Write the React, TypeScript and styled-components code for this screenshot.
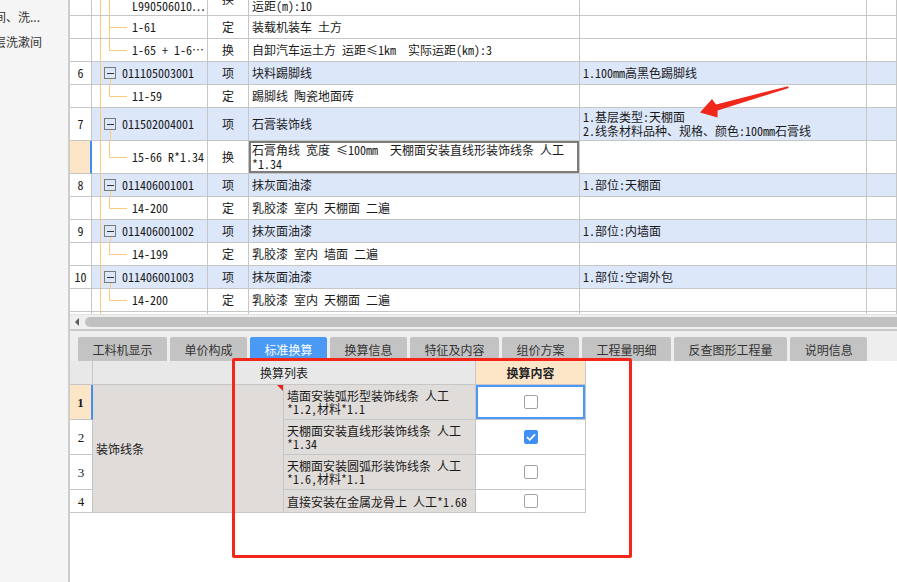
import React from 'react';
import styled, { createGlobalStyle } from 'styled-components';

const GRID_FONT = `"Noto Sans Mono CJK SC", "Noto Sans CJK SC", "Liberation Mono", monospace`;
const UI_FONT = `"Noto Sans CJK SC", "Noto Sans", sans-serif`;
const LINE = '#c6c6c6';
const TREE = '#ffca7a';

const GlobalStyle = createGlobalStyle`
  html, body { margin: 0; padding: 0; background: #fff; }
  body { font-family: ${UI_FONT}; font-size: 12px; color: #1e1e1e; }
  * { box-sizing: border-box; }
`;

const Page = styled.div`
  position: relative;
  display: flex;
  width: 897px;
  height: 582px;
  overflow: hidden;
  background: #fff;
`;

const Sidebar = styled.div`
  width: 70px;
  flex-shrink: 0;
  background: #f5f5f5;
  border-right: 2px solid #cdcdcd;
  padding-top: 10px;
  display: flex;
  flex-direction: column;
  overflow: hidden;
`;

const SideItem = styled.div`
  height: 25px;
  line-height: 14px;
  margin-left: -6px;
  white-space: nowrap;
  color: #333;
  font-family: ${UI_FONT};
  font-size: 12px;
`;

const Main = styled.div`
  flex: 1;
  min-width: 0;
  display: flex;
  flex-direction: column;
`;

const TopGrid = styled.div`
  height: 314px;
  flex-shrink: 0;
  overflow: hidden;
  font-family: ${GRID_FONT};
  font-size: 12px;
  line-height: 14px;
  color: #1a1a1a;
`;

const GridRow = styled.div<{ $h: number; $first?: boolean; $parent?: boolean }>`
  display: grid;
  grid-template-columns: 22px 116px 41px 331px 287px 1fr;
  height: ${(p) => p.$h}px;
  margin-top: ${(p) => (p.$first ? -17 : 0)}px;
  background: ${(p) => (p.$parent ? '#dce7fa' : '#fff')};
`;

const Cell = styled.div<{ $center?: boolean; $pad?: number }>`
  border-right: 1px solid ${LINE};
  border-bottom: 1px solid ${LINE};
  display: flex;
  flex-direction: column;
  justify-content: center;
  align-items: ${(p) => (p.$center ? 'center' : 'flex-start')};
  padding-left: ${(p) => p.$pad ?? 0}px;
  overflow: hidden;
  white-space: pre;
`;

const NumCell = styled(Cell)<{ $sel?: boolean }>`
  background: ${(p) => (p.$sel ? '#fde6c8' : '#fff')};
  border-right: ${(p) => (p.$sel ? '2px solid #3f8ef0' : `1px solid ${LINE}`)};
`;

const CodeCell = styled.div<{ $sel?: boolean }>`
  border-right: 1px solid ${LINE};
  border-bottom: 1px solid ${LINE};
  display: flex;
  align-items: stretch;
  overflow: hidden;
  white-space: pre;
  background: ${(p) => (p.$sel ? '#fff' : 'transparent')};
`;

const CodeText = styled.div`
  display: flex;
  flex-direction: column;
  justify-content: center;
`;

const NameCell = styled(Cell)<{ $edit?: boolean }>`
  background: ${(p) => (p.$edit ? '#fff' : 'transparent')};
  box-shadow: ${(p) => (p.$edit ? 'inset 0 0 0 2px #7d7d7d' : 'none')};
`;

const TextLine = styled.span`
  display: block;
`;

const Scrollbar = styled.div`
  height: 15px;
  flex-shrink: 0;
  background: #efefef;
  border-top: 1px solid #e2e2e2;
  display: flex;
  align-items: center;
  padding-left: 5px;
`;

const ScrollArrow = styled.div`
  width: 0;
  height: 0;
  border-top: 4px solid transparent;
  border-bottom: 4px solid transparent;
  border-right: 4px solid #5a5a5a;
`;

const ScrollThumb = styled.div`
  flex: 1;
  height: 10px;
  margin-left: 6px;
  background: #c1c1c1;
  border-radius: 5px 0 0 5px;
`;

const TabBar = styled.div`
  height: 32px;
  flex-shrink: 0;
  background: #eeeeee;
  border-top: 2px solid #c9c9c9;
  display: flex;
  align-items: flex-end;
  gap: 3px;
  padding-left: 8px;
`;

const Tab = styled.div<{ $active?: boolean }>`
  height: 24px;
  padding: 0 14.5px;
  display: flex;
  align-items: center;
  border-radius: 2px 2px 0 0;
  background: ${(p) => (p.$active ? '#4a9af5' : '#c3c3c3')};
  color: ${(p) => (p.$active ? '#fff' : '#333')};
  font-family: ${UI_FONT};
  font-size: 12px;
  white-space: nowrap;
`;

const BottomArea = styled.div`
  flex: 1;
  background: #fff;
`;

const BottomGrid = styled.div`
  display: grid;
  grid-template-columns: 23px 191px 192px 110px;
  grid-template-rows: 24px 35px 35px 35px 23px;
  width: 516px;
  font-family: ${GRID_FONT};
  font-size: 12px;
  line-height: 13px;
  color: #1a1a1a;
`;

const BCell = styled.div<{ $bg?: string; $center?: boolean; $span?: string; $rows?: string }>`
  position: relative;
  border-right: 1px solid ${LINE};
  border-bottom: 1px solid ${LINE};
  background: ${(p) => p.$bg ?? '#fff'};
  display: flex;
  flex-direction: column;
  justify-content: center;
  align-items: ${(p) => (p.$center ? 'center' : 'flex-start')};
  padding-left: ${(p) => (p.$center ? 0 : 3)}px;
  grid-column: ${(p) => p.$span ?? 'auto'};
  grid-row: ${(p) => p.$rows ?? 'auto'};
  white-space: pre;
`;

const HeaderText = styled.span<{ $bold?: boolean }>`
  font-family: ${UI_FONT};
  font-size: 12px;
  font-weight: ${(p) => (p.$bold ? 700 : 400)};
  color: #222;
`;

const RowNum = styled(BCell)<{ $sel?: boolean }>`
  font-family: "Liberation Serif", serif;
  font-size: 13px;
  font-weight: ${(p) => (p.$sel ? 700 : 400)};
  background: ${(p) => (p.$sel ? '#fde6c8' : '#fff')};
  border-right: ${(p) => (p.$sel ? '2px solid #3f8ef0' : `1px solid ${LINE}`)};
`;

const CheckCell = styled(BCell)<{ $sel?: boolean }>`
  box-shadow: ${(p) => (p.$sel ? 'inset 0 0 0 2px #4a9af5' : 'none')};
`;

const Box = styled.div<{ $on?: boolean }>`
  width: 14px;
  height: 14px;
  border-radius: 2px;
  border: 1px solid ${(p) => (p.$on ? '#3f8ff7' : '#a2a2a2')};
  background: ${(p) => (p.$on ? '#3f8ff7' : '#fff')};
  display: flex;
  align-items: center;
  justify-content: center;
`;

const CornerMark = styled.div`
  position: absolute;
  top: 0;
  right: 0;
  width: 0;
  height: 0;
  border-top: 6px solid #e8231b;
  border-left: 6px solid transparent;
`;

const RedFrame = styled.div`
  position: absolute;
  left: 232px;
  top: 358px;
  width: 400px;
  height: 200px;
  border: 3px solid #f4261a;
  border-radius: 2px;
  pointer-events: none;
`;

const ArrowSvg = styled.svg`
  position: absolute;
  left: 690px;
  top: 80px;
  pointer-events: none;
`;

type Kind = 'parent' | 'child' | 'blank';
interface RowData {
  kind: Kind;
  num?: string;
  code?: string[];
  type?: string;
  name?: string[];
  feature?: string[];
  h: number;
  branch?: 'full' | 'last';
  first?: boolean;
  selected?: boolean;
}

const rows: RowData[] = [
  { kind: 'child', code: ['1-63 R*1.2', 'L990506010…'], type: '换', name: ['机械运土方', '运距(m):10'], h: 33, branch: 'full', first: true },
  { kind: 'child', code: ['1-61'], type: '定', name: ['装载机装车 土方'], h: 23, branch: 'full' },
  { kind: 'child', code: ['1-65 + 1-6…'], type: '换', name: ['自卸汽车运土方 运距≤1km  实际运距(km):3'], h: 23, branch: 'last' },
  { kind: 'parent', num: '6', code: ['011105003001'], type: '项', name: ['块料踢脚线'], feature: ['1.100mm高黑色踢脚线'], h: 23 },
  { kind: 'child', code: ['11-59'], type: '定', name: ['踢脚线 陶瓷地面砖'], h: 23, branch: 'last' },
  { kind: 'parent', num: '7', code: ['011502004001'], type: '项', name: ['石膏装饰线'], feature: ['1.基层类型:天棚面', '2.线条材料品种、规格、颜色:100mm石膏线'], h: 33 },
  { kind: 'child', code: ['15-66 R*1.34'], type: '换', name: ['石膏角线 宽度 ≤100mm  天棚面安装直线形装饰线条 人工', '*1.34'], h: 33, branch: 'last', selected: true },
  { kind: 'parent', num: '8', code: ['011406001001'], type: '项', name: ['抹灰面油漆'], feature: ['1.部位:天棚面'], h: 23 },
  { kind: 'child', code: ['14-200'], type: '定', name: ['乳胶漆 室内 天棚面 二遍'], h: 23, branch: 'last' },
  { kind: 'parent', num: '9', code: ['011406001002'], type: '项', name: ['抹灰面油漆'], feature: ['1.部位:内墙面'], h: 23 },
  { kind: 'child', code: ['14-199'], type: '定', name: ['乳胶漆 室内 墙面 二遍'], h: 23, branch: 'last' },
  { kind: 'parent', num: '10', code: ['011406001003'], type: '项', name: ['抹灰面油漆'], feature: ['1.部位:空调外包'], h: 23 },
  { kind: 'child', code: ['14-200'], type: '定', name: ['乳胶漆 室内 天棚面 二遍'], h: 23, branch: 'last' },
  { kind: 'blank', h: 23 },
];

const TreeGutter: React.FC<{ kind: Kind; h: number; branch?: 'full' | 'last' }> = ({ kind, h, branch }) => {
  const ih = h - 1;
  const mid = Math.floor(ih / 2);
  const w = kind === 'parent' ? 30 : kind === 'child' ? 40 : 30;
  return (
    <svg width={w} height={ih} style={{ flexShrink: 0, display: 'block' }}>
      <line x1={8.5} y1={0} x2={8.5} y2={ih} stroke={TREE} strokeWidth={1} />
      {kind === 'parent' && (
        <>
          <rect x={12.5} y={mid - 5.5} width={11} height={11} fill="none" stroke="#7a7a7a" strokeWidth={1} />
          <rect x={15} y={mid} width={7} height={1} fill="#333" />
          <line x1={18.5} y1={mid + 6} x2={18.5} y2={ih} stroke={TREE} strokeWidth={1} />
        </>
      )}
      {kind === 'child' && (
        <>
          <line x1={17.5} y1={0} x2={17.5} y2={branch === 'full' ? ih : mid + 0.5} stroke={TREE} strokeWidth={1} />
          <line x1={17.5} y1={mid + 0.5} x2={35} y2={mid + 0.5} stroke={TREE} strokeWidth={1} />
        </>
      )}
    </svg>
  );
};

const Lines: React.FC<{ lines?: string[] }> = ({ lines }) => (
  <>{(lines ?? []).map((l, i) => <TextLine key={i}>{l}</TextLine>)}</>
);

const tabs = ['工料机显示', '单价构成', '标准换算', '换算信息', '特征及内容', '组价方案', '工程量明细', '反查图形工程量', '说明信息'];

const conv = [
  { lines: ['墙面安装弧形型装饰线条 人工', '*1.2,材料*1.1'], checked: false },
  { lines: ['天棚面安装直线形装饰线条 人工', '*1.34'], checked: true },
  { lines: ['天棚面安装圆弧形装饰线条 人工', '*1.6,材料*1.1'], checked: false },
  { lines: ['直接安装在金属龙骨上 人工*1.68'], checked: false },
];

const BEIGE = '#e0dcd9';

export default function App() {
  return (
    <>
      <GlobalStyle />
      <Page>
        <Sidebar>
          <SideItem>间、洗...</SideItem>
          <SideItem>层洗漱间</SideItem>
        </Sidebar>
        <Main>
          <TopGrid>
            {rows.map((r, i) => (
              <GridRow key={i} $h={r.h} $first={r.first} $parent={r.kind === 'parent'}>
                <NumCell $center $sel={r.selected}>{r.num ?? ''}</NumCell>
                <CodeCell $sel={r.selected}>
                  <TreeGutter kind={r.kind} h={r.h} branch={r.branch} />
                  <CodeText>
                    <Lines lines={r.code} />
                  </CodeText>
                </CodeCell>
                <Cell $center>{r.type ?? ''}</Cell>
                <NameCell $pad={3} $edit={r.selected}>
                  <Lines lines={r.name} />
                </NameCell>
                <Cell $pad={3}>
                  <Lines lines={r.feature} />
                </Cell>
                <Cell />
              </GridRow>
            ))}
          </TopGrid>
          <Scrollbar>
            <ScrollArrow />
            <ScrollThumb />
          </Scrollbar>
          <TabBar>
            {tabs.map((t) => (
              <Tab key={t} $active={t === '标准换算'}>{t}</Tab>
            ))}
          </TabBar>
          <BottomArea>
            <BottomGrid>
              <BCell $bg="#e8e8e8" />
              <BCell $bg="#e8e8e8" $center $span="2 / 4">
                <HeaderText>换算列表</HeaderText>
              </BCell>
              <BCell $bg="#fde6c8" $center>
                <HeaderText $bold>换算内容</HeaderText>
              </BCell>
              <BCell $bg={BEIGE} $span="2 / 3" $rows="2 / 6">
                装饰线条
                <CornerMark />
              </BCell>
              {conv.map((c, i) => (
                <React.Fragment key={i}>
                  <RowNum $center $sel={i === 0} style={{ gridColumn: '1 / 2', gridRow: `${i + 2} / ${i + 3}` }}>
                    {String(i + 1)}
                  </RowNum>
                  <BCell $bg={BEIGE} style={{ gridColumn: '3 / 4', gridRow: `${i + 2} / ${i + 3}` }}>
                    <Lines lines={c.lines} />
                  </BCell>
                  <CheckCell $center $sel={i === 0} style={{ gridColumn: '4 / 5', gridRow: `${i + 2} / ${i + 3}` }}>
                    <Box $on={c.checked}>
                      {c.checked && (
                        <svg width="10" height="8" viewBox="0 0 10 8">
                          <path d="M1 4.2 L3.8 6.8 L9 1.4" fill="none" stroke="#fff" strokeWidth="1.8" />
                        </svg>
                      )}
                    </Box>
                  </CheckCell>
                </React.Fragment>
              ))}
            </BottomGrid>
          </BottomArea>
        </Main>
        <RedFrame />
        <ArrowSvg width="110" height="45" viewBox="690 80 110 45">
          <polygon
            points="700,112.5 712,99 716,104.5 788,86.2 788.8,88 717.6,110.4 717.5,117.5"
            fill="#f0281c"
          />
        </ArrowSvg>
      </Page>
    </>
  );
}
